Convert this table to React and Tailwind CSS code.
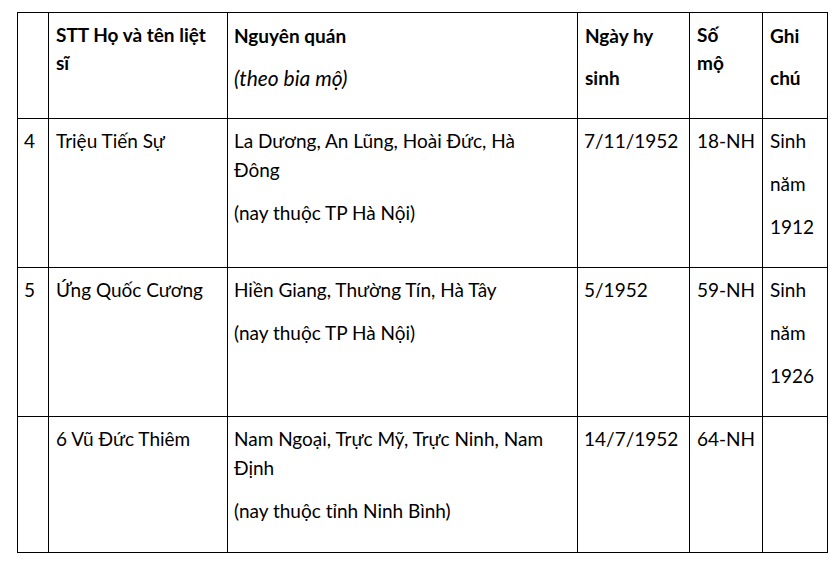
import React from 'react';

const cols = ['w-[31px]', 'w-[179px]', 'w-[350px]', 'w-[112px]', 'w-[73px]', 'w-[65px]'];

const rows = [
  {
    h: 'h-[149px]',
    cells: [
      [['4']],
      [['Triệu Tiến Sự']],
      [['La Dương, An Lũng, Hoài Đức, Hà', 'Đông'], ['(nay thuộc TP Hà Nội)']],
      [['7/11/1952']],
      [['18-NH']],
      [['Sinh'], ['năm'], ['1912']],
    ],
  },
  {
    h: 'h-[149px]',
    cells: [
      [['5']],
      [['Ứng Quốc Cương']],
      [['Hiền Giang, Thường Tín, Hà Tây'], ['(nay thuộc TP Hà Nội)']],
      [['5/1952']],
      [['59-NH']],
      [['Sinh'], ['năm'], ['1926']],
    ],
  },
  {
    h: 'h-[136px]',
    cells: [
      [],
      [['6 Vũ Đức Thiêm']],
      [['Nam Ngoại, Trực Mỹ, Trực Ninh, Nam', 'Định'], ['(nay thuộc tỉnh Ninh Bình)']],
      [['14/7/1952']],
      [['64-NH']],
      [],
    ],
  },
];

function Paras({ paras }) {
  return (
    <div className="flex flex-col gap-[14px]">
      {paras.map((lines, i) => (
        <p key={i} className="leading-[29px] whitespace-nowrap">
          {lines.map((l, j) => (
            <span key={j} className="block">{l}</span>
          ))}
        </p>
      ))}
    </div>
  );
}

export default function App() {
  return (
    <div className="bg-white w-[839px] h-[565px] pt-[12px] pl-[17px] text-black font-['Lato','Noto_Sans',sans-serif] text-[19px]">
      <table className="border-collapse table-fixed w-[810px]">
        <colgroup>
          {cols.map((c, i) => <col key={i} className={c} />)}
        </colgroup>
        <thead>
          <tr className="h-[106px]">
            <th className="border border-black align-top" />
            <th className="border border-black align-top text-left font-bold pl-[7px] pt-[8px]">
              <span className="block leading-[28px]">STT Họ và tên liệt</span>
              <span className="block leading-[28px]">sĩ</span>
            </th>
            <th className="border border-black align-top text-left pl-[6px] pt-[8px]">
              <div className="flex flex-col gap-[13px]">
                <span className="block leading-[29px] font-bold">Nguyên quán</span>
                <span className="block leading-[29px] italic font-normal text-[21px]">(theo bia mộ)</span>
              </div>
            </th>
            <th className="border border-black align-top text-left font-bold pl-[7px] pt-[8px]">
              <div className="flex flex-col gap-[13px]">
                <span className="block leading-[29px]">Ngày hy</span>
                <span className="block leading-[29px]">sinh</span>
              </div>
            </th>
            <th className="border border-black align-top text-left font-bold pl-[7px] pt-[8px]">
              <span className="block leading-[28px]">Số</span>
              <span className="block leading-[28px]">mộ</span>
            </th>
            <th className="border border-black align-top text-left font-bold pl-[7px] pt-[8px]">
              <div className="flex flex-col gap-[13px]">
                <span className="block leading-[29px]">Ghi</span>
                <span className="block leading-[29px]">chú</span>
              </div>
            </th>
          </tr>
        </thead>
        <tbody>
          {rows.map((r, i) => (
            <tr key={i} className={r.h}>
              {r.cells.map((paras, j) => (
                <td key={j} className={`border border-black align-top pt-[7px] ${j === 0 || j === 2 || j === 3 ? 'pl-[6px]' : 'pl-[7px]'}`}>
                  <Paras paras={paras} />
                </td>
              ))}
            </tr>
          ))}
        </tbody>
      </table>
    </div>
  );
}
